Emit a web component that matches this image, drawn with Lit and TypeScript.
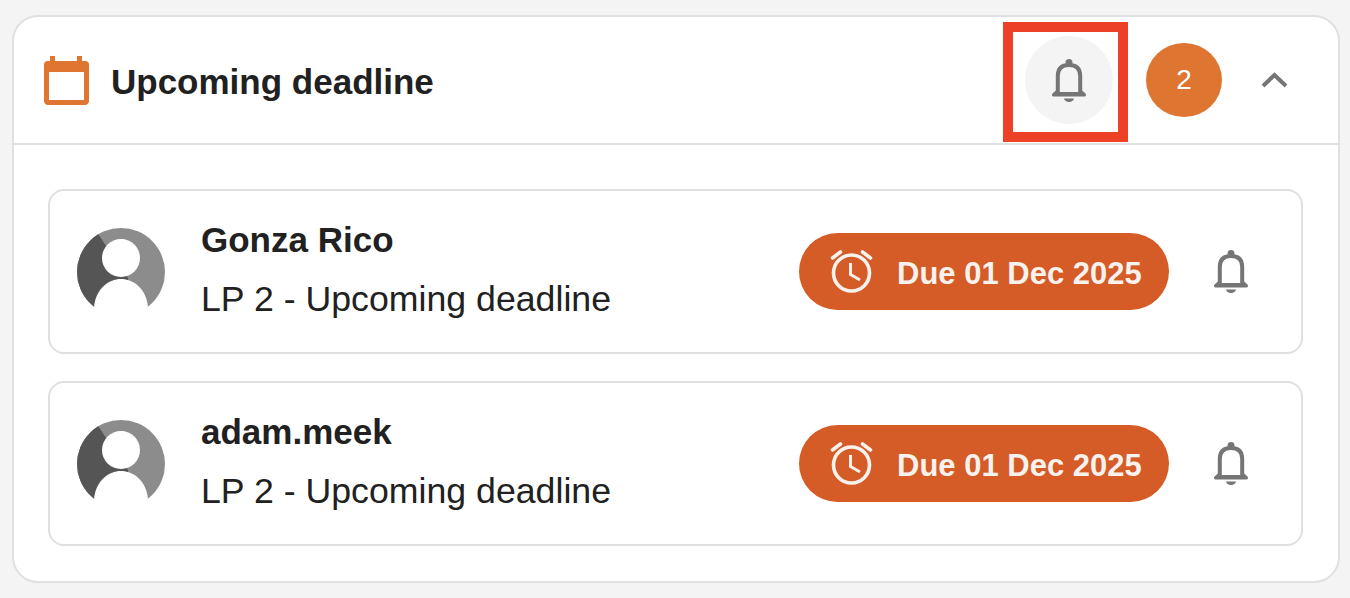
import { LitElement, html, css, svg } from 'lit';
import { customElement } from 'lit/decorators.js';

const bell = svg`
  <path d="M6.800 34V17C6.800 9.500 11 6 18 6s11.200 3.500 11.200 11V34" fill="none" stroke="currentColor" stroke-width="4"/>
  <circle cx="18" cy="3.500" r="3.500" fill="currentColor"/>
  <path d="M1.500 34.500 6 30.500v2.500H30v-2.500l4.500 4c1 1 .5 3-1 3H2.500c-1.500 0-2-2-1-3z" fill="currentColor"/>
  <path d="M13 39.400h10c-.4 2.100-2.400 3.600-5 3.600s-4.600-1.500-5-3.600z" fill="currentColor"/>
`;

const people = [
  { name: 'Gonza Rico', note: 'LP 2 - Upcoming deadline', due: 'Due 01 Dec 2025' },
  { name: 'adam.meek', note: 'LP 2 - Upcoming deadline', due: 'Due 01 Dec 2025' },
];

@customElement('app-root')
export class AppRoot extends LitElement {
  static styles = css`
    :host {
      display: block;
      height: 598px;
      box-sizing: border-box;
      padding: 15px 10px 15px 12px;
      background: #f4f4f4;
      font-family: "Liberation Sans", Arial, sans-serif;
      color: #212121;
      overflow: hidden;
    }

    .card {
      position: relative;
      box-sizing: border-box;
      height: 568px;
      background: #fff;
      border: 2px solid #e0e0e0;
      border-radius: 26px;
    }

    .head {
      display: flex;
      align-items: center;
      box-sizing: border-box;
      height: 128px;
      padding: 0 50px 0 30px;
      border-bottom: 2px solid #e0e0e0;
    }

    .cal {
      width: 45px;
      height: 49px;
      margin: 1px 22px 0 0;
      flex: none;
    }

    h1 {
      flex: 1;
      margin: 3px 0 0;
      font-size: 35px;
      font-weight: 700;
    }

    .bell-btn {
      display: flex;
      align-items: center;
      justify-content: center;
      width: 88px;
      height: 88px;
      border-radius: 50%;
      background: #f4f4f4;
      color: #757575;
      margin-right: 33px;
    }

    .bell {
      width: 36px;
      height: 43px;
      display: block;
      flex: none;
    }

    .count {
      display: flex;
      align-items: center;
      justify-content: center;
      width: 76px;
      height: 74px;
      border-radius: 50%;
      background: #de7530;
      color: #fff;
      font-size: 28px;
      margin-right: 39px;
    }

    .chev {
      width: 27px;
      height: 16px;
      display: block;
    }

    .callout {
      position: absolute;
      left: 989px;
      top: 5px;
      box-sizing: border-box;
      width: 125px;
      height: 120px;
      border: 10px solid #ec4127;
    }

    .list {
      display: flex;
      flex-direction: column;
      gap: 27px;
      padding: 44px 35px 0 34px;
    }

    .row {
      display: flex;
      align-items: center;
      box-sizing: border-box;
      height: 165px;
      padding: 0 52px 0 27px;
      border: 2px solid #e0e0e0;
      border-radius: 16px;
    }

    .avatar {
      width: 88px;
      height: 88px;
      margin-right: 36px;
      flex: none;
    }

    .text {
      flex: 1;
      margin-top: -5px;
    }

    .name {
      font-size: 35px;
      font-weight: 700;
      line-height: 40px;
    }

    .note {
      margin-top: 19px;
      font-size: 35.700px;
      line-height: 40px;
    }

    .pill {
      display: flex;
      align-items: center;
      box-sizing: border-box;
      width: 370px;
      height: 77px;
      padding-left: 31px;
      margin-right: 44px;
      border-radius: 39px;
      background: #d55c27;
      color: #f7f2ee;
      font-size: 31px;
      font-weight: 700;
      white-space: nowrap;
    }

    .pill span {
      margin-top: 5px;
    }

    .alarm {
      width: 44px;
      height: 44px;
      margin-right: 23px;
      flex: none;
    }

    .row .bell {
      color: #757575;
    }
  `;

  renderAvatar() {
    return html`<svg class="avatar" viewBox="0 0 88 88">
      <defs><clipPath id="disc"><circle cx="44" cy="44" r="44"/></clipPath></defs>
      <g clip-path="url(#disc)">
        <rect width="88" height="79" fill="#8c8c8c"/>
        <path d="M0 0H17L51 50V79H0z" fill="#555"/>
        <path d="M17 79C19 60 32 51 44 51s25 9 27 28z" fill="#fff"/>
      </g>
      <circle cx="44" cy="30" r="19" fill="#fff"/>
    </svg>`;
  }

  render() {
    return html`
      <div class="card">
        <div class="head">
          <svg class="cal" viewBox="0 0 45 49">
            <path fill-rule="evenodd" fill="#de7530" d="M6 0h5v5H33V0h5v5h3.500C43.500 5 45 6.500 45 8.500V45c0 2.300-1.700 4-4 4H4c-2.300 0-4-1.700-4-4V8.500C0 6.500 1.500 5 3.500 5H6zM5 16V44H40V16z"/>
          </svg>
          <h1>Upcoming deadline</h1>
          <div class="bell-btn"><svg class="bell" viewBox="0 0 36 43">${bell}</svg></div>
          <div class="count">2</div>
          <svg class="chev" viewBox="0 0 27 16">
            <path d="M2 14 13.500 3 25 14" fill="none" stroke="#757575" stroke-width="4"/>
          </svg>
        </div>
        <div class="callout"></div>
        <div class="list">
          ${people.map(
            (p) => html`
              <div class="row">
                ${this.renderAvatar()}
                <div class="text">
                  <div class="name">${p.name}</div>
                  <div class="note">${p.note}</div>
                </div>
                <div class="pill">
                  <svg class="alarm" viewBox="0 0 44 44" fill="none" stroke="currentColor" stroke-width="3.600">
                    <circle cx="21.500" cy="23" r="18"/>
                    <path d="M20.500 13V24.500L30 30" stroke-width="3"/>
                    <path d="M2.500 8 10.500 2M32.500 2 40.500 8" stroke-linecap="round"/>
                  </svg>
                  <span>${p.due}</span>
                </div>
                <svg class="bell" viewBox="0 0 36 43">${bell}</svg>
              </div>
            `
          )}
        </div>
      </div>
    `;
  }
}
